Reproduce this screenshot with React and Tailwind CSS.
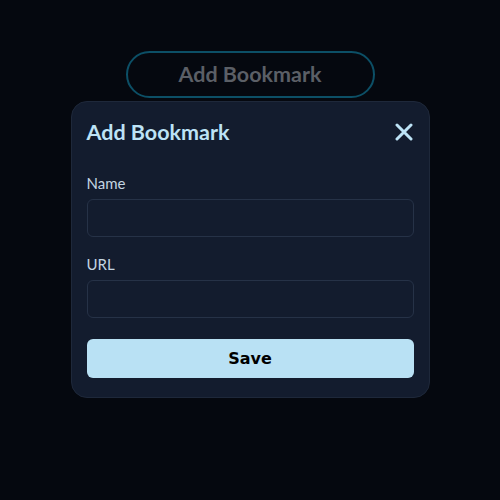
export default function App() {
  return (
    <div className="w-[500px] h-[500px] bg-[#05080f] flex flex-col items-center" style={{ fontFamily: '"Lato", "Noto Sans", sans-serif' }}>
      <button className="mt-[51px] w-[249px] h-[47px] rounded-[24px] border-2 border-[#0c4f66] text-[#5b5f66] text-[21.5px] font-bold flex items-center justify-center">
        Add Bookmark
      </button>
      <div className="mt-[3px] w-[359px] rounded-[16px] bg-[#131c2e] border border-[#1e283a] px-[15px] pt-[15px] pb-[19px] flex flex-col">
        <div className="flex items-center justify-between h-[30px]">
          <span className="text-[21.5px] font-bold text-[#bde3f6] leading-[30px]">Add Bookmark</span>
          <svg width="18" height="18" viewBox="0 0 18 18" className="mr-[1px]">
            <path d="M2 2 L16 16 M16 2 L2 16" stroke="#bde3f6" strokeWidth="3" strokeLinecap="round" />
          </svg>
        </div>
        <label className="mt-[26px] text-[15px] leading-[20px] text-[#c3d5e2]">Name</label>
        <div className="mt-[6px] h-[38px] rounded-[6px] border border-[#263247] bg-[#131c2e]"></div>
        <label className="mt-[17px] text-[15px] leading-[20px] text-[#c3d5e2]">URL</label>
        <div className="mt-[6px] h-[38px] rounded-[6px] border border-[#263247] bg-[#131c2e]"></div>
        <button className="mt-[21px] h-[39px] rounded-[6px] bg-[#b9e1f4] text-black text-[16px] font-bold flex items-center justify-center" style={{ fontFamily: '"DejaVu Sans", sans-serif' }}>
          Save
        </button>
      </div>
    </div>
  );
}
